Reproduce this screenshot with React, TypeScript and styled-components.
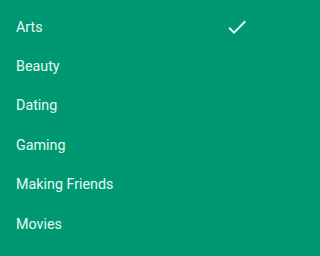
import React from "react";
import styled, { createGlobalStyle } from "styled-components";

const GlobalStyle = createGlobalStyle`
  html, body {
    margin: 0;
    padding: 0;
    background: #009872;
  }
`;

const Menu = styled.ul`
  list-style: none;
  margin: 0;
  padding: 7px 0 0;
  width: 256px;
  height: 256px;
  box-sizing: border-box;
  background: #009872;
  font-family: Roboto, "Noto Sans", sans-serif;
  overflow: hidden;
`;

const Item = styled.li`
  display: flex;
  align-items: center;
  justify-content: space-between;
  height: 39.4px;
  padding: 0 7px 0 16px;
  font-size: 14.3px;
  color: #e4faf1;
`;

const Check = styled.svg`
  width: 24px;
  height: 24px;
  fill: #e4faf1;
`;

const topics = ["Arts", "Beauty", "Dating", "Gaming", "Making Friends", "Movies"];

const App: React.FC = () => {
  const selected = "Arts";
  return (
    <>
      <GlobalStyle />
      <Menu>
        {topics.map((t) => (
          <Item key={t}>
            <span>{t}</span>
            {t === selected && (
              <Check viewBox="0 0 24 24">
                <path d="M9 16.17L4.83 12l-1.42 1.41L9 19 21 7l-1.41-1.41z" />
              </Check>
            )}
          </Item>
        ))}
      </Menu>
    </>
  );
};

export default App;
